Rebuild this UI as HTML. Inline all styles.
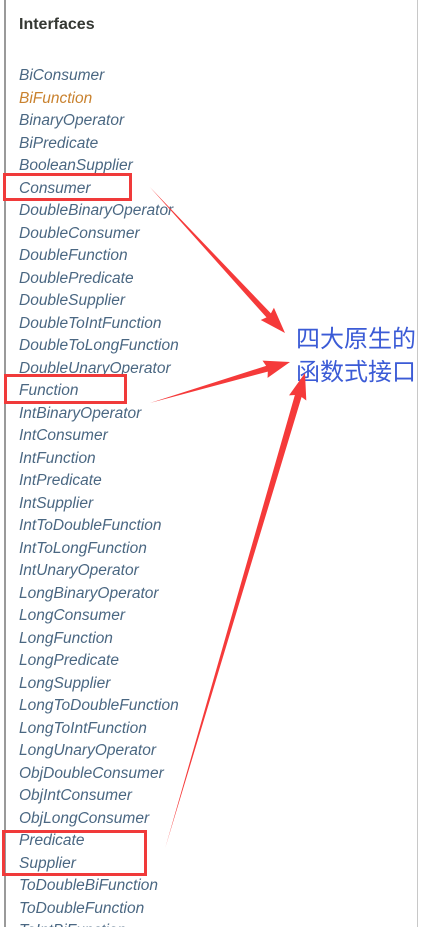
<!DOCTYPE html>
<html><head><meta charset="utf-8"><style>
html,body{margin:0;padding:0;background:#fff;width:425px;height:927px;overflow:hidden;position:relative}
.lb{position:absolute;left:4px;top:0;width:2px;height:927px;background:#9a9a9a}
.rb{position:absolute;left:417px;top:0;width:1px;height:927px;background:#c8c8c8}
h{position:absolute;left:19px;top:16px;font:bold 16px "Liberation Sans",sans-serif;color:#353833}
.it{position:absolute;left:19px;font:italic 15.5px "Liberation Sans",sans-serif;color:#4a6782;line-height:18px;white-space:nowrap}
.box{position:absolute;border:3px solid #f03a3a}
.cn{position:absolute;left:296px;font:24px "Liberation Sans","Noto Sans CJK SC",sans-serif;color:#3b5bd6;line-height:33px;top:323px}
svg{position:absolute;left:0;top:0}
</style></head><body>
<div class="lb"></div><div class="rb"></div>
<h>Interfaces</h>
<div class="it" style="top:67px">BiConsumer</div>
<div class="it" style="top:90px;color:#c9822f">BiFunction</div>
<div class="it" style="top:112px">BinaryOperator</div>
<div class="it" style="top:135px">BiPredicate</div>
<div class="it" style="top:157px">BooleanSupplier</div>
<div class="it" style="top:180px">Consumer</div>
<div class="it" style="top:202px">DoubleBinaryOperator</div>
<div class="it" style="top:225px">DoubleConsumer</div>
<div class="it" style="top:247px">DoubleFunction</div>
<div class="it" style="top:270px">DoublePredicate</div>
<div class="it" style="top:292px">DoubleSupplier</div>
<div class="it" style="top:315px">DoubleToIntFunction</div>
<div class="it" style="top:337px">DoubleToLongFunction</div>
<div class="it" style="top:360px">DoubleUnaryOperator</div>
<div class="it" style="top:382px">Function</div>
<div class="it" style="top:405px">IntBinaryOperator</div>
<div class="it" style="top:427px">IntConsumer</div>
<div class="it" style="top:450px">IntFunction</div>
<div class="it" style="top:472px">IntPredicate</div>
<div class="it" style="top:495px">IntSupplier</div>
<div class="it" style="top:517px">IntToDoubleFunction</div>
<div class="it" style="top:540px">IntToLongFunction</div>
<div class="it" style="top:562px">IntUnaryOperator</div>
<div class="it" style="top:585px">LongBinaryOperator</div>
<div class="it" style="top:607px">LongConsumer</div>
<div class="it" style="top:630px">LongFunction</div>
<div class="it" style="top:652px">LongPredicate</div>
<div class="it" style="top:675px">LongSupplier</div>
<div class="it" style="top:697px">LongToDoubleFunction</div>
<div class="it" style="top:720px">LongToIntFunction</div>
<div class="it" style="top:742px">LongUnaryOperator</div>
<div class="it" style="top:765px">ObjDoubleConsumer</div>
<div class="it" style="top:787px">ObjIntConsumer</div>
<div class="it" style="top:810px">ObjLongConsumer</div>
<div class="it" style="top:832px">Predicate</div>
<div class="it" style="top:855px">Supplier</div>
<div class="it" style="top:877px">ToDoubleBiFunction</div>
<div class="it" style="top:900px">ToDoubleFunction</div>
<div class="it" style="top:922px">ToIntBiFunction</div>
<div class="box" style="left:3px;top:173px;width:123px;height:22px"></div>
<div class="box" style="left:4px;top:374px;width:117px;height:24px"></div>
<div class="box" style="left:2px;top:830px;width:139px;height:40px"></div>
<div class="cn">四大原生的<br>函数式接口</div>
<svg width="425" height="927">
<g fill="#f53a3a">
<polygon transform="translate(285,333) rotate(47.2)" points="-199,0 -24,-3 -26,-9 0,0 -26,9 -24,3"/>
<polygon transform="translate(290,362) rotate(-16.3)" points="-146,0 -24,-3 -26,-9 0,0 -26,9 -24,3"/>
<polygon transform="translate(305,373) rotate(-73.6)" points="-495,0 -24,-3.5 -26,-9 0,0 -26,9 -24,3.5"/>
</g>
</svg>
</body></html>
